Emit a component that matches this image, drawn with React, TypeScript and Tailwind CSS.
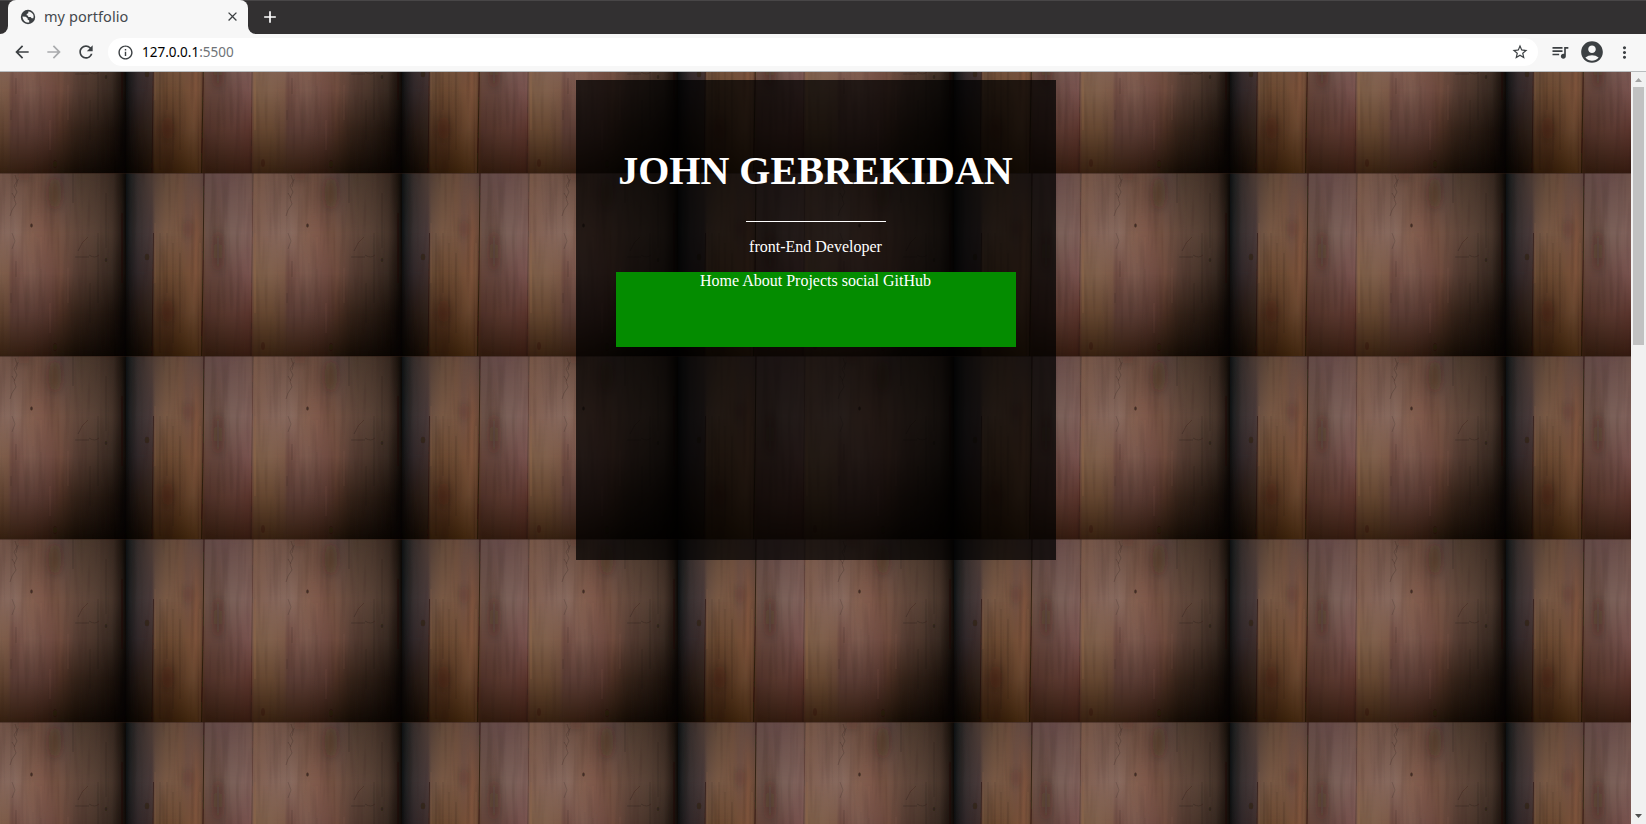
import React from "react";
import {
  MdAccountCircle,
  MdAdd,
  MdArrowBack,
  MdArrowForward,
  MdClose,
  MdInfoOutline,
  MdMoreVert,
  MdQueueMusic,
  MdRefresh,
  MdStarBorder,
} from "react-icons/md";

const TILE_W = 276;
const TILE_H = 183;

type Stop = [number, string];

// Horizontal colour profiles of the planks, sampled down the tile.
const rows: { y: number; stops: Stop[] }[] = [
  {
    y: 0,
    stops: [
      [0, "#0c1012"], [4, "#1c1e1e"], [12, "#352c2a"], [27, "#4e3c34"], [40, "#604838"],
      [55, "#684a3a"], [65, "#644a40"], [76, "#5e4640"], [80, "#624a46"], [100, "#664a48"],
      [126, "#6c5048"], [128, "#765646"], [145, "#725448"], [170, "#684c40"], [190, "#684a3c"],
      [205, "#5c443c"], [212, "#54403a"], [230, "#4c3a2e"], [250, "#443228"], [264, "#34261e"],
      [272, "#1a120c"], [276, "#0a0806"],
    ],
  },
  {
    y: 60,
    stops: [
      [0, "#0c1012"], [4, "#202021"], [12, "#383030"], [26, "#4a3a3a"], [29, "#6a5042"],
      [40, "#785844"], [55, "#785642"], [62, "#705044"], [70, "#7e543e"], [76, "#6c4a38"],
      [80, "#6c5248"], [92, "#6a4e44"], [105, "#7a6058"], [125, "#80605a"], [128, "#826050"],
      [145, "#846458"], [165, "#886a5e"], [178, "#846050"], [195, "#7c5648"], [208, "#725040"],
      [211, "#725244"], [225, "#64493c"], [245, "#584236"], [262, "#46342a"], [271, "#281c16"],
      [276, "#0a0806"],
    ],
  },
  {
    y: 100,
    stops: [
      [0, "#0e0e0e"], [4, "#1c191a"], [12, "#302628"], [26, "#3e2e2c"], [29, "#644832"],
      [40, "#6a4830"], [55, "#6e4c34"], [70, "#7c523a"], [76, "#644430"], [80, "#64443a"],
      [95, "#62443c"], [110, "#704e48"], [125, "#78524e"], [128, "#806048"], [145, "#80604c"],
      [158, "#7c5a48"], [162, "#785248"], [180, "#7c5a4e"], [200, "#704c42"], [210, "#704c3e"],
      [225, "#583e34"], [245, "#48342a"], [262, "#362820"], [271, "#1e150f"], [276, "#0e0906"],
    ],
  },
  {
    y: 140,
    stops: [
      [0, "#080504"], [4, "#140e0c"], [14, "#241812"], [26, "#2e2018"], [29, "#4c301e"],
      [40, "#4a2c1a"], [55, "#583822"], [68, "#68462e"], [76, "#50301e"], [80, "#4e3028"],
      [95, "#56362c"], [110, "#5a3830"], [125, "#5a342c"], [128, "#644630"], [145, "#644630"],
      [158, "#604232"], [162, "#5a3c34"], [180, "#5a3c34"], [200, "#52342c"], [210, "#4a2e22"],
      [225, "#342218"], [245, "#291b13"], [262, "#1b110b"], [276, "#060302"],
    ],
  },
  {
    y: 183,
    stops: [
      [0, "#040200"], [6, "#080400"], [15, "#100802"], [26, "#1a0e04"], [29, "#2e1a08"],
      [40, "#2e1808"], [55, "#38200a"], [70, "#44280f"], [76, "#361e0e"], [80, "#2e180c"],
      [95, "#301a0e"], [110, "#331a0e"], [125, "#34190f"], [128, "#382010"], [145, "#36200f"],
      [160, "#331e10"], [180, "#301a0e"], [200, "#26140a"], [210, "#1e1208"], [225, "#140b04"],
      [245, "#0e0702"], [262, "#080300"], [276, "#020000"],
    ],
  },
];

function WoodBackground() {
  return (
    <svg className="absolute inset-0 h-full w-full" aria-hidden="true">
      <defs>
        {rows.map((row, i) => (
          <linearGradient key={row.y} id={`row${i}`} gradientUnits="userSpaceOnUse" x1="0" y1="0" x2={TILE_W} y2="0">
            {row.stops.map(([x, c]) => (
              <stop key={x} offset={x / TILE_W} stopColor={c} />
            ))}
          </linearGradient>
        ))}
        {rows.slice(1).map((row, i) => (
          <React.Fragment key={row.y}>
            <linearGradient id={`fade${i + 1}`} gradientUnits="userSpaceOnUse" x1="0" y1={rows[i].y} x2="0" y2={row.y}>
              <stop offset="0" stopColor="#fff" stopOpacity="0" />
              <stop offset="1" stopColor="#fff" />
            </linearGradient>
            <mask id={`mask${i + 1}`} maskUnits="userSpaceOnUse" x="0" y="0" width={TILE_W} height={TILE_H}>
              <rect width={TILE_W} height={TILE_H} fill={`url(#fade${i + 1})`} />
            </mask>
          </React.Fragment>
        ))}
        <filter id="grain" x="0" y="0" width="1" height="1" colorInterpolationFilters="sRGB">
          <feTurbulence type="fractalNoise" baseFrequency="0.2 0.014" numOctaves="2" seed="8" />
          <feColorMatrix values="0 0 0 0 0.1  0 0 0 0 0.05  0 0 0 0 0.04  1.6 0 0 0 -0.7" />
        </filter>
        <filter id="soft">
          <feGaussianBlur stdDeviation="0.7" />
        </filter>
        <filter id="smudge" x="-1" y="-1" width="3" height="3">
          <feGaussianBlur stdDeviation="4.5" />
        </filter>
        <pattern id="wood" patternUnits="userSpaceOnUse" x="126" y="101" width={TILE_W} height={TILE_H}>
          {rows.map((row, i) => (
            <rect
              key={row.y}
              width={TILE_W}
              height={TILE_H}
              fill={`url(#row${i})`}
              mask={i > 0 ? `url(#mask${i})` : undefined}
            />
          ))}
          <rect width={TILE_W} height={TILE_H} filter="url(#grain)" opacity="0.2" />
          <g filter="url(#smudge)" fill="#2a1712">
            <ellipse cx="92" cy="78" rx="4" ry="20" opacity="0.35" />
            <ellipse cx="62" cy="56" rx="3" ry="9" opacity="0.25" />
            <ellipse cx="205" cy="20" rx="7" ry="16" opacity="0.25" />
            <ellipse cx="42" cy="138" rx="6" ry="12" opacity="0.2" />
            <ellipse cx="174" cy="3" rx="8" ry="5" opacity="0.15" />
          </g>
          <g filter="url(#soft)" fill="none" stroke="#1c0f0a">
            <path d="M27.500 60L26 183" opacity="0.45" />
            <path d="M78 0L77 100L75.500 183" opacity="0.7" />
            <path d="M127 0L126 90L125 183" opacity="0.25" />
            <path d="M223 0V30" opacity="0.2" />
            <path d="M272 40V110" opacity="0.6" />
            <path d="M256 20V75M248 60V130M240 110V150" opacity="0.15" />
            <path d="M34 60V180M41 60V120M47 70V170M54 80V160" opacity="0.13" />
            <path d="M165 2l2 6l-3 5l3 6l-3 6l2 6l-4 6l-2 6M168 6l-2 8M162 20l3 5" opacity="0.2" strokeWidth="0.9" />
            <path d="M162 60l3 8l-3 8M166 88v16M161 120v10" opacity="0.14" />
            <path d="M225 84h14M228 78q4 -10 10 -14M239 82q6 4 10 0" opacity="0.2" />
          </g>
          <g filter="url(#soft)" fill="none" stroke="#b07a58">
            <path d="M74 70V183" opacity="0.15" />
            <path d="M129 60V140" opacity="0.22" />
            <path d="M29 50V110" opacity="0.18" />
            <path d="M183 60V90M191 64V96M218 95V130M200 130V160" opacity="0.14" />
          </g>
          <g filter="url(#soft)" fill="#22130f">
            <ellipse cx="181.500" cy="52.500" rx="1.200" ry="2" opacity="0.65" />
            <ellipse cx="21" cy="84" rx="2.200" ry="3.200" opacity="0.4" />
            <ellipse cx="256" cy="87" rx="1.200" ry="2" opacity="0.5" />
            <ellipse cx="205" cy="174" rx="2" ry="4" opacity="0.35" />
            <ellipse cx="137" cy="173" rx="2" ry="4" opacity="0.25" />
          </g>
          <rect y="0" width={TILE_W} height="1" fill="#2a1710" opacity="0.4" />
        </pattern>
      </defs>
      <rect width="100%" height="100%" fill="url(#wood)" />
    </svg>
  );
}

function GlobeIcon() {
  return (
    <svg viewBox="0 0 16 16" className="size-4 shrink-0" aria-hidden="true">
      <circle cx="8" cy="8" r="7.200" fill="#3c4043" />
      <path
        d="M8.300 2.400C10.500 2.500 12.400 3.800 13.200 5.600C13.700 6.800 13.700 8.100 13.300 9.200L11.700 9.300L10.600 8.100H8.200V6.800L6.700 6.300V4.900L8.300 4.300z"
        fill="#f7f7f7"
      />
      <path
        d="M2.500 7.400L5.700 7.700L7.600 9.200V10.600L9.200 11.500V13.400C6 13.900 2.600 11.500 2.500 7.400z"
        fill="#f7f7f7"
      />
    </svg>
  );
}

function TabStrip() {
  return (
    <div className="flex h-[34px] shrink-0 items-stretch border-t border-[#484647] bg-[#323031]">
      <div className="w-2 bg-[#f7f7f7]">
        <div className="h-full rounded-br-lg bg-[#323031]" />
      </div>
      <div className="-mt-px flex w-60 items-center rounded-t-lg bg-[#f7f7f7] pb-px pl-3 pr-2">
        <GlobeIcon />
        <span className="ml-2 flex-1 whitespace-nowrap pb-px text-[14.5px] leading-5 tracking-[0.06px] text-[#45494d]">
          my portfolio
        </span>
        <MdClose className="size-[15px] text-[#3c4043]" />
      </div>
      <div className="w-2 bg-[#f7f7f7]">
        <div className="h-full rounded-bl-lg bg-[#323031]" />
      </div>
      <div className="flex w-7 items-center justify-center pb-px">
        <MdAdd className="size-5 text-white" />
      </div>
    </div>
  );
}

function Toolbar() {
  return (
    <div className="flex h-[38px] shrink-0 items-center border-b border-[#b9bcbe] bg-[#f7f7f7] pl-3 text-[#3c4043]">
      <MdArrowBack className="-mt-px size-5" />
      <MdArrowForward className="-mt-px ml-3 size-5 text-[#a9abad]" />
      <MdRefresh className="-mt-px ml-3 size-5" />
      <div className="-mt-px ml-3 flex h-7 w-[1430px] items-center rounded-full bg-white pl-[9px] pr-[9px]">
        <MdInfoOutline className="size-[17px]" />
        <span className="ml-2 flex-1 text-[13.5px] leading-5 text-[#6f7377]">
          <span className="text-black">127.0.0.1</span>:5500
        </span>
        <MdStarBorder className="size-[18px]" />
      </div>
      <MdQueueMusic className="-mt-px ml-3 size-5" />
      <MdAccountCircle className="-mt-px ml-[9px] size-[26px]" />
      <MdMoreVert className="-mt-px ml-[10px] size-[19px]" />
    </div>
  );
}

function Scrollbar() {
  return (
    <div className="flex w-[15px] shrink-0 flex-col items-center bg-[#f1f1f1]">
      <div className="flex h-[15px] items-center">
        <svg width="7" height="4" viewBox="0 0 7 4" className="mt-px">
          <path d="M0 4L3.500 0L7 4z" fill="#a3a3a3" />
        </svg>
      </div>
      <div className="h-[258px] w-[11px] bg-[#c1c1c1]" />
      <div className="flex-1" />
      <div className="flex h-[15px] items-center">
        <svg width="7" height="4" viewBox="0 0 7 4" className="-mt-px">
          <path d="M0 0L3.500 4L7 0z" fill="#505050" />
        </svg>
      </div>
    </div>
  );
}

export default function App() {
  return (
    <div className="flex h-[824px] w-[1646px] flex-col overflow-hidden font-['Noto_Sans',sans-serif]">
      <TabStrip />
      <Toolbar />
      <div className="flex min-h-0 flex-1">
        <main className="relative flex-1 pl-[575.5px] pt-2 font-['Liberation_Serif',serif] text-base leading-[18px] text-white">
          <WoodBackground />
          <section className="relative h-[480px] w-[480px] bg-black/73 p-10 text-center">
            <h1 className="mt-7 whitespace-nowrap text-[40px] font-bold leading-[46px]">JOHN GEBREKIDAN</h1>
            <hr className="mx-auto mt-[27px] h-px w-[140px] border-0 bg-white" />
            <p className="mt-4">front-End Developer</p>
            <nav className="mt-4 h-[75px] bg-[#048c00]">Home About Projects social GitHub</nav>
          </section>
        </main>
        <Scrollbar />
      </div>
    </div>
  );
}
